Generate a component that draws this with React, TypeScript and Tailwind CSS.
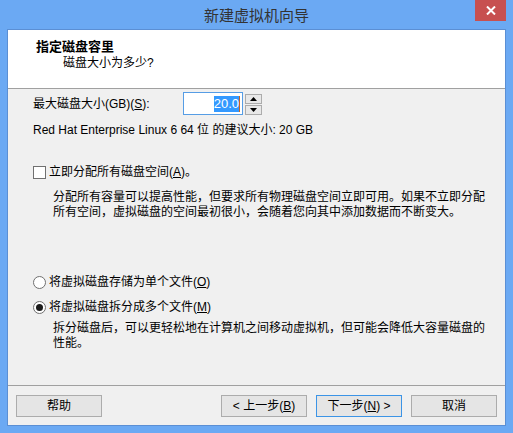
import React from 'react'

const font = "font-['Liberation_Sans','Noto_Sans_CJK_SC',sans-serif]"

function Btn({ label, primary }: { label: React.ReactNode; primary?: boolean }) {
  return (
    <div
      className={`w-[86px] h-[22px] flex items-center justify-center bg-[#e5e5e5] border leading-none ${
        primary ? 'border-[#3c94e6]' : 'border-[#acacac]'
      }`}
    >
      {label}
    </div>
  )
}

export default function App() {
  return (
    <div className={`w-[513px] h-[433px] bg-[#6ba9f3] flex flex-col text-[12px] text-black ${font}`}>
      {/* title bar */}
      <div className="relative h-[29px] flex items-center justify-center">
        <span className="text-[15px] text-[#333] leading-none pt-[1px]">新建虚拟机向导</span>
        <div className="absolute top-0 right-[7px] w-[31px] h-[21px] bg-[#c75050] flex items-center justify-center">
          <svg width="10" height="9" viewBox="0 0 10 9">
            <path d="M1 0.5 L9 8.5 M9 0.5 L1 8.5" stroke="#fff" strokeWidth="2" />
          </svg>
        </div>
      </div>

      {/* client */}
      <div className="mx-[7px] mb-[7px] flex-1 border border-[#5b8fd4] bg-[#f0f0f0] flex flex-col">
        <div className="h-[59px] bg-white border-b border-[#a0a0a0]">
          <div className="pt-[9px] pl-[28px] text-[13px] font-bold leading-[16px]">指定磁盘容里</div>
          <div className="pl-[55px] leading-[16px]">磁盘大小为多少?</div>
        </div>

        <div className="flex-1 pl-[25px]">
          <div className="mt-[3px] h-[23px] flex items-center">
            <div className="w-[150px] leading-[16px]">
              最大磁盘大小(GB)(<span className="underline">S</span>):
            </div>
            <div className="w-[60px] h-[23px] border border-[#569de5] bg-white flex items-center justify-end pr-[2px]">
              <span className="bg-[#3399ff] text-white leading-[16px] text-[13px]">20.0</span>
              <span className="w-[1px] h-[16px] bg-[#c8641e]" />
            </div>
            <div className="ml-[2px] self-end h-[21px] flex flex-col gap-[1px]">
              <div className="w-[17px] h-[10px] border border-[#acacac] bg-[#e8e8e8] flex items-center justify-center">
                <svg width="7" height="4" viewBox="0 0 7 4">
                  <path d="M3.5 0 L7 4 L0 4 Z" fill="#000" />
                </svg>
              </div>
              <div className="w-[17px] h-[10px] border border-[#acacac] bg-[#e8e8e8] flex items-center justify-center">
                <svg width="7" height="4" viewBox="0 0 7 4">
                  <path d="M0 0 L7 0 L3.5 4 Z" fill="#000" />
                </svg>
              </div>
            </div>
          </div>

          <div className="mt-[7px] leading-[16px]">Red Hat Enterprise Linux 6 64 位 的建议大小: 20 GB</div>

          <div className="mt-[26px] h-[16px] flex items-center">
            <div className="w-[13px] h-[13px] border border-[#707070] bg-white" />
            <div className="ml-[3px] leading-[16px]">
              立即分配所有磁盘空间(<span className="underline">A</span>)。
            </div>
          </div>

          <div className="mt-[10px] pl-[20px] leading-[15px] whitespace-nowrap">
            <div>分配所有容量可以提高性能，但要求所有物理磁盘空间立即可用。如果不立即分配</div>
            <div>所有空间，虚拟磁盘的空间最初很小，会随着您向其中添加数据而不断变大。</div>
          </div>

          <div className="mt-[54px] h-[16px] flex items-center">
            <div className="w-[13px] h-[13px] rounded-full border border-[#707070] bg-white" />
            <div className="ml-[3px] leading-[16px]">
              将虚拟磁盘存储为单个文件(<span className="underline">O</span>)
            </div>
          </div>

          <div className="mt-[9px] h-[16px] flex items-center">
            <div className="w-[13px] h-[13px] rounded-full border border-[#707070] bg-white flex items-center justify-center">
              <div className="w-[7px] h-[7px] rounded-full bg-[#1b1b1b]" />
            </div>
            <div className="ml-[3px] leading-[16px]">
              将虚拟磁盘拆分成多个文件(<span className="underline">M</span>)
            </div>
          </div>

          <div className="mt-[6px] pl-[20px] leading-[15px] whitespace-nowrap">
            <div>拆分磁盘后，可以更轻松地在计算机之间移动虚拟机，但可能会降低大容量磁盘的</div>
            <div>性能。</div>
          </div>
        </div>

        <div className="h-[40px] border-t border-[#a0a0a0] pt-[9px] px-[8px] flex justify-between items-start">
          <Btn label="帮助" />
          <div className="flex gap-[9px]">
            <Btn label={<span>&lt; 上一步(<span className="underline">B</span>)</span>} />
            <Btn primary label={<span>下一步(<span className="underline">N</span>) &gt;</span>} />
            <Btn label="取消" />
          </div>
        </div>
      </div>
    </div>
  )
}
